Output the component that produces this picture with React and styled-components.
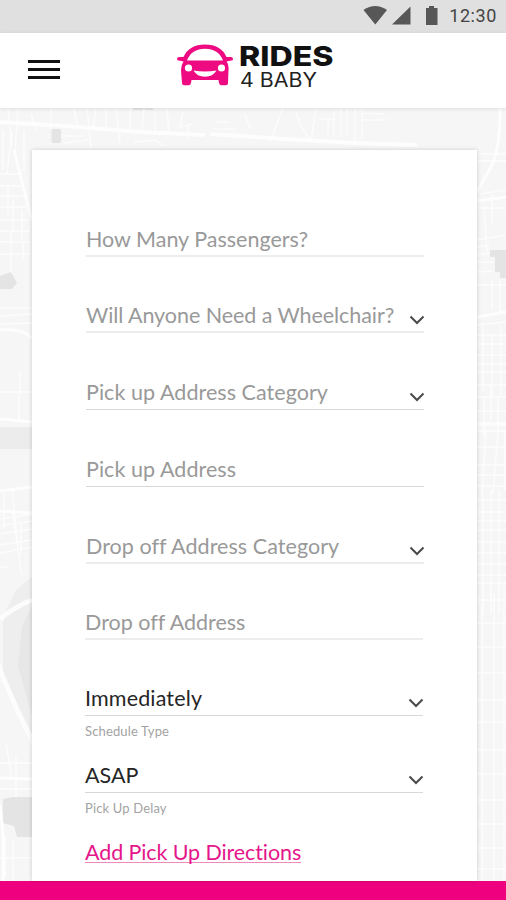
import React from "react";
import styled, { createGlobalStyle } from "styled-components";

//Global
const GlobalStyle = createGlobalStyle`
  body {
    margin: 0;
    background: #fff;
    font-family: Lato, "Open Sans", sans-serif;
    font-variant-ligatures: none;
  }
  * {
    box-sizing: border-box;
  }
`;

//Styled
const Screen = styled.div`
  width: 506px;
  height: 900px;
  display: flex;
  flex-direction: column;
  overflow: hidden;
`;

const StatusBar = styled.div`
  height: 33px;
  flex: none;
  display: flex;
  align-items: flex-start;
  justify-content: flex-end;
  padding-right: 9px;
  background: #e0e0e0;
`;

const StatusIcons = styled.svg`
  display: block;
  margin-right: 11px;
`;

const Clock = styled.span`
  font: 400 18px/32px Roboto, sans-serif;
  letter-spacing: 0.6px;
  color: #444;
`;

const Header = styled.header`
  height: 75px;
  flex: none;
  display: flex;
  align-items: flex-start;
  padding-left: 28px;
  background: #fff;
  box-shadow: 0 1px 4px rgba(0, 0, 0, 0.1);
  z-index: 1;
`;

const MenuButton = styled.button`
  width: 32px;
  margin: 27px 116px 0 0;
  padding: 0;
  display: flex;
  flex-direction: column;
  gap: 5px;
  border: none;
  background: none;
`;

const MenuLine = styled.span`
  height: 3px;
  width: 32px;
  background: #111;
`;

const Logo = styled.svg`
  display: block;
  margin-top: 7px;
`;

const Content = styled.main`
  position: relative;
  height: 773px;
  flex: none;
  padding: 42px 29px 0 32px;
  background: #f6f6f6;
`;

const Map = styled.svg`
  position: absolute;
  top: 0;
  left: 0;
`;

const Card = styled.form`
  position: relative;
  height: 100%;
  padding: 31px 53px 0;
  background: #fff;
  box-shadow: 0 0 4px rgba(0, 0, 0, 0.18);
`;

const Field = styled.div`
  width: 338px;
  height: ${(props) => props.$height}px;
  margin-left: ${(props) => (props.$inset ? 1 : 0)}px;
  display: flex;
  align-items: flex-end;
  justify-content: space-between;
  border-bottom: ${(props) => (props.$soft ? "2px solid #ededed" : "1px solid #d8d8d8")};
`;

const FieldText = styled.span`
  font-size: 21.5px;
  line-height: 26px;
  letter-spacing: ${(props) => props.$spacing || 0}px;
  padding-bottom: ${(props) => (props.$soft ? 3 : 4)}px;
  white-space: nowrap;
  color: ${(props) => (props.$filled ? "#262626" : "#999")};
`;

const Chevron = styled.svg`
  flex: none;
  margin: 0 -1px ${(props) => (props.$soft ? 6 : 7)}px 0;
`;

const Caption = styled.div`
  height: 27px;
  font-size: 13px;
  line-height: 31px;
  letter-spacing: 0.15px;
  color: #a3a3a3;
`;

const DirectionsLink = styled.a`
  display: inline-block;
  margin-top: 19px;
  font-size: 21.5px;
  line-height: 26px;
  letter-spacing: -0.1px;
  color: #e5158a;
  text-decoration: underline;
  text-decoration-thickness: 1px;
  text-decoration-color: #f08abd;
  text-underline-offset: 2px;
  text-decoration-skip-ink: none;
`;

const Footer = styled.footer`
  height: 19px;
  flex: none;
  background: #ee007f;
`;

const fields = [
  { label: "How Many Passengers?", height: 76, inset: true, soft: true },
  { label: "Will Anyone Need a Wheelchair?", height: 76, inset: true, soft: true, select: true, spacing: -0.06 },
  { label: "Pick up Address Category", height: 77, inset: true, select: true, spacing: 0.05 },
  { label: "Pick up Address", height: 77, inset: true, spacing: 0.05 },
  { label: "Drop off Address Category", height: 77, inset: true, soft: true, select: true, spacing: 0.05 },
  { label: "Drop off Address", height: 76, soft: true },
  { label: "Immediately", height: 76, filled: true, select: true, caption: "Schedule Type", spacing: 0.15 },
  { label: "ASAP", height: 50, filled: true, select: true, caption: "Pick Up Delay" },
];

function StreetMap() {
  return (
    <Map width="506" height="773" viewBox="0 108 506 773" fill="none" stroke="#fff">
      {/* blocks and parks */}
      <g stroke="none" fill="#e4e4e4">
        <rect x="50" y="129" width="11" height="14" rx="2" />
        <path d="M0 276l11-4 6 11-5 6H0z" />
        <path d="M490 250h16v28h-6v-6h-5v-15h-5z" />
        <path d="M0 427h32v22H0z" fill="#ececec" />
        <path d="M32 577L16 590 8 606 3 622V675L32 744z" fill="#eee" />
        <path d="M32 606l-10 20-4 40 14 50z" fill="#e7e7e7" />
        <path d="M3 799l10-2h19v40H17l-3-11-12-3z" />
        <path d="M133 108h20v2h-20z" />
      </g>

      {/* main roads */}
      <g opacity="0.85">
        <path strokeWidth="4" d="M0 122l65 4 75 6 65 3M210 134l75 5 70 4M355 143l62 2" />
        <path strokeWidth="3" d="M14 150l9 36 9 35M0 330q22-2 32 8M0 419l32 3" />
        <path strokeWidth="5" d="M0 619q16-13 32-19M-2 665Q14 705 34 744" />
        <path strokeWidth="3" d="M500 108q1 32-7 55l-16 29M0 778l32 1M0 805q5 35 3 76M0 511l32 2M0 491l32-4" />
        <path strokeWidth="3" d="M477 424h29M477 201l29-4M477 317l29-5" />
      </g>

      {/* side streets along the top */}
      <path
        opacity="0.65"
        strokeWidth="1.5"
        d="M8 108l4 38M18 108l-3 44M31 113l5 18M51 108v36M74 108l3 16M87 108l4 40M96 108l-3 21
        M106 108v22M116 108l4 35M130 108v24M144 108l-2 24M155 112v20M167 108l2 26M183 112l-3 15 13-3
        M188 124v14M283 108l-13 34M296 113l7 17 7 10M316 108l-5 33M328 118v17M334 110v26M341 108v30
        M347 108v28M355 108v36M362 108v32M62 136h22M64 143l25-3M215 122h15M213 129h22M245 114l5 15
        M318 119h17M362 120h24M362 113l22 1M134 142l22-2 8 6"
      />

      {/* left margin */}
      <path
        opacity="0.7"
        strokeWidth="1.5"
        d="M3 130v40M12 132l-5 42M24 131v40M0 174h22M0 186h21M0 196h25M0 207h26M0 220h28M0 231h30
        M8 185v29M13 199v33M22 210v30M0 242h30M0 254h30M11 231v41M23 242v18M0 308h32M0 316l32-2
        M0 324l32-1M0 392h32M20 372v23M19 396v26M4 493v36M12 487l6 60M0 519l32-5M0 526l32-5
        M0 534l32-5M0 545l32-5M12 510l10 65M21 522v32M0 553l32-6M0 567h7M0 763h32M6 743l6 35M16 757v40M0 789h32
        M5 837v40M13 840v41M0 858h32"
      />

      {/* right margin */}
      <path
        opacity="0.7"
        strokeWidth="1.5"
        d="M477 154h29M478 161h28M480 194l26-4M479 208h27M492 195v30M484 207l3 45M477 240l29-5
        M477 247l13-2M477 255l13-2M477 262h16M477 272l17-1M477 285h29M492 279v31M500 279v33
        M477 325l29-3M477 335h29M483 326v65M492 334v63M501 326v70M477 344h29M477 355h29M477 364h29
        M477 372h29M477 385h29M477 397h29M484 398v38M498 398v38M491 386v34M477 411h29M477 431h29
        M486 431l-4 63M498 431l-5 63M505 430v60M477 447h29M477 465h29M477 475h29M477 486h29
        M483 494v120M491 490v124M499 490v124M477 500h29M477 512h29M477 521h29M477 530h29M477 542h29
        M477 553h29M477 564h29M477 575h29M482 606v275M494 594v287M504 585v296M477 583h29M477 600h29
        M477 623h29M477 647h29M477 673h29M477 700h29M477 722h29M477 750h29M477 774h29M477 800h29
        M477 824h29M477 848h29M477 869h29"
      />
    </Map>
  );
}

function RidesLogo() {
  return (
    <Logo width="160" height="54" viewBox="175 40 160 54">
      <path
        fill="#ee0a80"
        fillRule="evenodd"
        d="M182.500 57Q188 44.500 204 44.500T225.500 57H230Q233 58 231.500 60.300L225.500 61.500Q228 65 227.500 70L227 83Q227 85.300 225 85.300H220.500Q218.500 85.300 218 83L217.500 80H190.500L190 83Q189.500 85.300 187.500 85.300H183Q181 85.300 181 83L180 70Q180 65 182.500 61.500L176.500 60.300Q175 58 178 57ZM186 60.500H222Q217.500 48.800 204 48.800T186 60.500Z"
      />
      <circle cx="187.500" cy="68" r="3.600" fill="#fff" />
      <circle cx="220.500" cy="68" r="3.600" fill="#fff" />
      <path fill="#fff" d="M192.500 70.500Q204 72.500 215.500 70.500Q212 76.700 204 76.700T192.500 70.500Z" />
      <text
        x="238"
        y="65.700"
        fontFamily="Inter, sans-serif"
        fontWeight="800"
        fontSize="27.500"
        textLength="94.500"
        lengthAdjust="spacingAndGlyphs"
        fill="#111"
      >
        RIDES
      </text>
      <text
        x="239"
        y="86.500"
        fontFamily="Inter, sans-serif"
        fontWeight="400"
        fontSize="19.500"
        textLength="77"
        lengthAdjust="spacingAndGlyphs"
        fill="#222"
      >
        4 BABY
      </text>
    </Logo>
  );
}

export default function App() {
  return (
    <Screen>
      <GlobalStyle />
      <StatusBar>
        <StatusIcons width="76" height="32" viewBox="362 0 76 32" fill="#575757">
          <path d="M363.500 10Q375 2 387 10L375.300 24.500Z" />
          <path d="M392 24.500L410.500 6.500V24.500Z" />
          <path d="M429 6h5v2h3.500v17H426V8h3z" />
        </StatusIcons>
        <Clock>12:30</Clock>
      </StatusBar>

      <Header>
        <MenuButton aria-label="Menu">
          <MenuLine />
          <MenuLine />
          <MenuLine />
        </MenuButton>
        <RidesLogo />
      </Header>

      <Content>
        <StreetMap />
        <Card>
          {fields.map((field) => (
            <React.Fragment key={field.label}>
              <Field $height={field.height} $inset={field.inset} $soft={field.soft}>
                <FieldText $filled={field.filled} $soft={field.soft} $spacing={field.spacing}>
                  {field.label}
                </FieldText>
                {field.select && (
                  <Chevron $soft={field.soft} width="16" height="10" viewBox="0 0 16 10">
                    <path d="M1.500 1.500L8 8l6.500-6.500" fill="none" stroke="#4a4a4a" strokeWidth="2" />
                  </Chevron>
                )}
              </Field>
              {field.caption && <Caption>{field.caption}</Caption>}
            </React.Fragment>
          ))}
          <DirectionsLink>Add Pick Up Directions</DirectionsLink>
        </Card>
      </Content>
      <Footer />
    </Screen>
  );
}
